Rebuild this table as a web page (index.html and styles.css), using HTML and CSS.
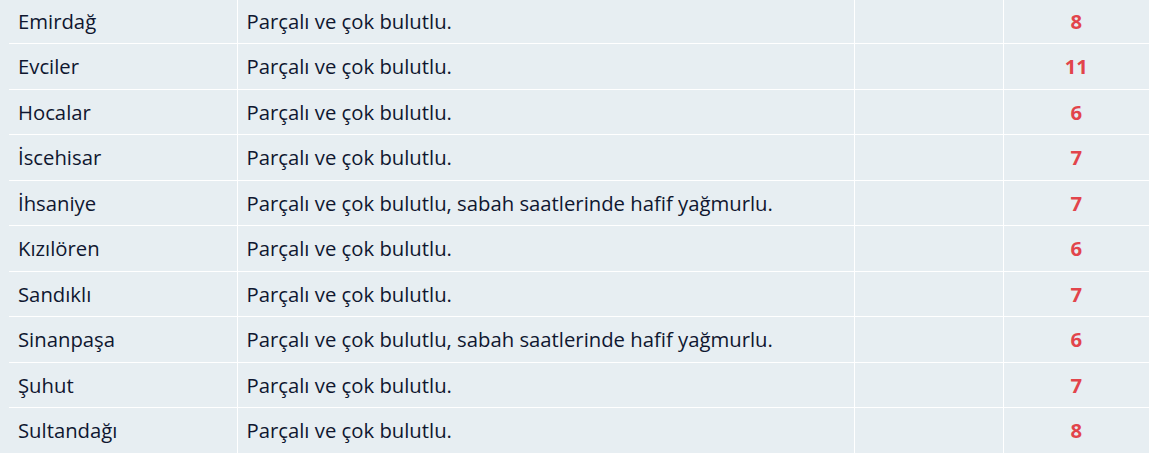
FILE: index.html
```html
<!DOCTYPE html>
<html lang="tr">
<head>
<meta charset="utf-8">
<link rel="stylesheet" href="styles.css">
</head>
<body>
<table class="weather">
  <tbody>
    <tr><td class="place">Emirdağ</td><td class="desc">Parçalı ve çok bulutlu.</td><td class="blank"></td><td class="temp">8</td></tr>
    <tr><td class="place">Evciler</td><td class="desc">Parçalı ve çok bulutlu.</td><td class="blank"></td><td class="temp">11</td></tr>
    <tr><td class="place">Hocalar</td><td class="desc">Parçalı ve çok bulutlu.</td><td class="blank"></td><td class="temp">6</td></tr>
    <tr><td class="place">İscehisar</td><td class="desc">Parçalı ve çok bulutlu.</td><td class="blank"></td><td class="temp">7</td></tr>
    <tr><td class="place">İhsaniye</td><td class="desc">Parçalı ve çok bulutlu, sabah saatlerinde hafif yağmurlu.</td><td class="blank"></td><td class="temp">7</td></tr>
    <tr><td class="place">Kızılören</td><td class="desc">Parçalı ve çok bulutlu.</td><td class="blank"></td><td class="temp">6</td></tr>
    <tr><td class="place">Sandıklı</td><td class="desc">Parçalı ve çok bulutlu.</td><td class="blank"></td><td class="temp">7</td></tr>
    <tr><td class="place">Sinanpaşa</td><td class="desc">Parçalı ve çok bulutlu, sabah saatlerinde hafif yağmurlu.</td><td class="blank"></td><td class="temp">6</td></tr>
    <tr><td class="place">Şuhut</td><td class="desc">Parçalı ve çok bulutlu.</td><td class="blank"></td><td class="temp">7</td></tr>
    <tr><td class="place">Sultandağı</td><td class="desc">Parçalı ve çok bulutlu.</td><td class="blank"></td><td class="temp">8</td></tr>
  </tbody>
</table>
</body>
</html>
```

FILE: styles.css
```css
html, body {
  margin: 0;
  padding: 0;
  background: #e7eef2;
  overflow: hidden;
}
body {
  padding-left: 9px;
  font-family: "Open Sans", "Noto Sans", sans-serif;
  font-size: 20.3px;
  color: #0f1730;
}
.weather {
  width: 1140px;
  border-collapse: collapse;
  margin-top: -2px;
}
.weather td {
  height: 45.5px;
  padding: 0 9px;
  border-bottom: 1px solid #ffffff;
  border-left: 1px solid #ffffff;
  vertical-align: middle;
  box-sizing: border-box;
}
.weather td:first-child {
  border-left: none;
}
.place { width: 228px; }
.desc { width: 617px; }
.blank { width: 149px; }
.temp {
  text-align: center;
  font-weight: 700;
  color: #e2444b;
}
```
